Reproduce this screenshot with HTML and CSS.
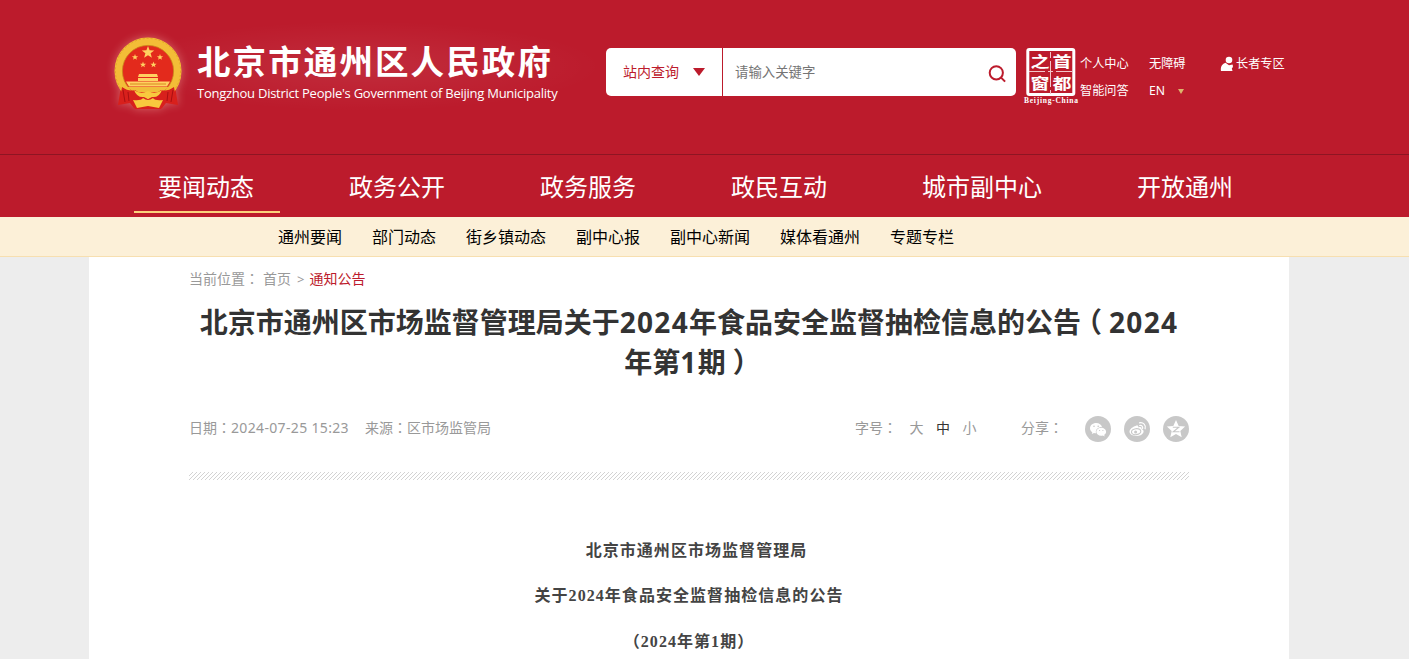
FILE: index.html
```html
<!DOCTYPE html>
<html lang="zh-CN">
<head>
<meta charset="utf-8">
<title>北京市通州区人民政府</title>
<link rel="stylesheet" href="styles.css">
</head>
<body>
<header class="header">
  <div class="brand">
    <svg class="emblem" viewBox="0 0 72 76">
      <path d="M9 50 L6 69 L18 67 L23 73 L49 73 L54 67 L66 69 L63 50Z" fill="#d8201c"/>
      <circle cx="36" cy="35" r="29.500" fill="#e32a1c" stroke="#f3bd37" stroke-width="8"/>
      <circle cx="36" cy="35" r="32.600" fill="none" stroke="#e2a526" stroke-width="1" stroke-dasharray="2 2"/>
      <circle cx="36" cy="35" r="25.600" fill="none" stroke="#c9811a" stroke-width=".8"/>
      <g fill="#ffd060">
        <path id="star" d="M36 10l1.600 4.300 4.600.2-3.600 2.800 1.300 4.400-3.900-2.500-3.900 2.500 1.300-4.400-3.600-2.800 4.600-.2z"/>
        <use href="#star" transform="translate(5 13) scale(.5)"/>
        <use href="#star" transform="translate(30 13) scale(.5)"/>
        <use href="#star" transform="translate(13 20.500) scale(.5)"/>
        <use href="#star" transform="translate(23.500 20.500) scale(.5)"/>
        <path d="M27 38h18l1 3H26zM26 42h20v3H26zM14 45.500h44l-3 5H17z"/>
      </g>
      <path d="M15 51h42l-7 5H22z" fill="#f0bd3a"/>
      <path d="M18 48h36" stroke="#d88a1c"/>
      <path d="M10 51q7 5 13 3l13 9 13-9q6 2 13-3l3 17-11-3-4 7H22l-4-7-11 3z" fill="#d8201c"/>
      <path d="M22 54q7 5 14 1 7 4 14-1-3 8-10 7l-4 2-4-2q-7 1-10-7zM21 64q8 1 10-2 5 4 10 0 2 3 10 2l-4 8-11-2-11 2z" fill="#f8c93e"/>
      <path d="M11 54l2 12M16 56l1 9M61 54l-2 12M56 56l-1 9" stroke="#a90f12" fill="none"/>
    </svg>
    <div class="brand-text">
      <div class="brand-cn">北京市通州区人民政府</div>
      <div class="brand-en">Tongzhou District People's Government of Beijing Municipality</div>
    </div>
  </div>
  <div class="search">
    <div class="search-scope">站内查询<i class="caret"></i></div>
    <div class="search-input">请输入关键字</div>
    <svg class="search-icon" viewBox="0 0 18 18"><circle cx="8.300" cy="7.800" r="6.600"/><path d="M13.100 12.600l4 4"/></svg>
  </div>
  <svg class="seal" viewBox="0 0 56 58">
    <rect class="seal-box" x="4.800" y="1.500" width="46" height="45" rx="1.500"/>
    <path class="seal-lines" d="M27.500 4v6m0 3v26m0 3v4M6 23.500h16m3 0h5m3 0h16"/>
    <g class="seal-chars">
      <text transform="translate(7.500 18.800) scale(1 .78)">之</text>
      <text transform="translate(29.500 18.800) scale(1 .78)">首</text>
      <text transform="translate(7.500 41) scale(1 .8)">窗</text>
      <text transform="translate(29.500 41) scale(1 .8)">都</text>
    </g>
    <text class="seal-name" x="1" y="55" textLength="54">Beijing-China</text>
  </svg>
  <div class="tools">
    <span>个人中心</span><span>无障碍</span>
    <span class="elder"><svg viewBox="0 0 14 16"><circle cx="9" cy="4" r="3.300"/><path d="M1 15q-1.200-6 4.500-8.200L9 9.200l3.500-.7q1.200 2.500-.7 3.800l.7 2.700z"/></svg>长者专区</span>
    <span>智能问答</span><span class="lang">EN<i></i></span>
  </div>
</header>
<nav class="nav">
  <span class="active">要闻动态</span><span>政务公开</span><span>政务服务</span><span>政民互动</span><span>城市副中心</span><span>开放通州</span>
</nav>
<nav class="subnav">
  <span>通州要闻</span><span>部门动态</span><span>街乡镇动态</span><span>副中心报</span><span>副中心新闻</span><span>媒体看通州</span><span>专题专栏</span>
</nav>
<main class="page">
  <div class="crumbs"><span>当前位置<i class="colon" lang="zh-TW">：</i></span><span class="home">首页</span><span class="sep">&gt;</span><span class="current">通知公告</span></div>
  <h1 class="title">北京市通州区市场监督管理局关于<b>2024</b>年食品安全监督抽检信息的公告<i class="open">（</i><b>2024</b><br>年第<b>1</b>期<i class="close">）</i></h1>
  <div class="meta">
    <div class="source"><span>日期<i class="colon" lang="zh-TW">：</i><b>2024-07-25 15:23</b></span><span>来源<i class="colon" lang="zh-TW">：</i>区市场监管局</span></div>
    <div class="sizes"><span>字号<i class="colon" lang="zh-TW">：</i></span><span>大</span><span class="on">中</span><span>小</span></div>
    <div class="share"><span>分享<i class="colon" lang="zh-TW">：</i></span>
      <svg viewBox="0 0 26 26"><circle class="disc" cx="13" cy="13" r="13"/><path class="glyph" d="M11.200 7c-3.500 0-6.200 2.300-6.200 5.200 0 1.700.9 3.100 2.300 4l-.5 1.900 2.200-1.200c.7.2 1.300.3 2 .3-.8-3.600 2-6.100 6-6.100C16.600 8.700 14.200 7 11.200 7z"/><path class="glyph" d="M16.200 11.700c-2.800 0-4.900 1.800-4.900 4s2.100 4 4.900 4c.6 0 1.200-.1 1.700-.3l1.700 1-.4-1.600c1.200-.8 1.900-1.900 1.900-3.100 0-2.200-2.200-4-4.900-4z"/><g class="disc"><circle cx="9" cy="10.200" r=".8"/><circle cx="13.200" cy="10.200" r=".8"/><circle cx="14.600" cy="14.500" r=".6"/><circle cx="17.900" cy="14.500" r=".6"/></g></svg>
      <svg viewBox="0 0 26 26"><circle class="disc" cx="13" cy="13" r="13"/><path class="glyph" d="M11.500 10c1.700-.8 3.200-.4 2.800 1.400 2.300-.8 3.900-.1 3.200 1.600 4.500 1.600 1.500 7-5.100 7-3.900 0-6.900-1.800-6.900-4.400 0-2.400 3.600-5 6-5.600z"/><ellipse class="ring" cx="12.200" cy="15.700" rx="4.700" ry="3" transform="rotate(-8 12 16)"/><circle class="disc" cx="11.600" cy="16" r="1.500"/><path class="wave" d="M15.600 9.500c2.100-.4 3.600 1 3 3M15.500 6.800c3.700-.8 6.800 2.200 5.600 6"/></svg>
      <svg viewBox="0 0 26 26"><circle class="disc" cx="13" cy="13" r="13"/><path class="glyph" d="M13 4l2.700 5.900 6.400.7-4.800 4.300 1.400 6.300-5.700-3.200-5.700 3.200 1.400-6.300-4.800-4.300 6.400-.7z"/><path class="ring" d="M9.800 11.300h6l-5.500 4.400h6.200"/></svg>
    </div>
  </div>
  <svg class="hatch"><defs><pattern id="lines" width="4" height="8" patternUnits="userSpaceOnUse"><path d="M-4 8L4 0M0 8L8 0M-8 8L0 0" stroke="#c8c8c8" stroke-width=".8"/></pattern></defs><rect width="1000" height="8" fill="url(#lines)"/></svg>
  <article class="article">
    <p>北京市通州区市场监督管理局</p>
    <p>关于2024年食品安全监督抽检信息的公告</p>
    <p>（2024年第1期）</p>
  </article>
</main>
</body>
</html>
```
FILE: styles.css
```css
* { box-sizing: border-box; }
body { margin: 0; height: 659px; overflow: hidden; background: #ededed; font-family: "Noto Sans", "Noto Sans CJK SC", sans-serif; font-size: 14px; white-space: nowrap; }
svg { display: block; flex: none; }
i { font-style: normal; }

.header { height: 155px; background: #bc1b2c; border-bottom: 1px solid #8e1523; display: flex; align-items: flex-start; color: #fff; padding-left: 112px; }
.brand { display: flex; width: 494px; padding-top: 36px; background: radial-gradient(ellipse 240px 45px at 250px 66px, rgba(255,255,255,.08), transparent); }
.emblem { width: 72px; height: 76px; filter: drop-shadow(0 0 5px rgba(255,210,190,.4)); }
.brand-text { margin-left: 13px; }
.brand-cn { height: 45px; line-height: 50px; font-size: 33.500px; font-weight: 700; letter-spacing: 2.100px; }
.brand-en { line-height: 24px; font-family: "Open Sans", sans-serif; font-size: 13px; letter-spacing: -.255px; }

.search { width: 410px; height: 48px; margin-top: 48px; display: flex; align-items: center; background: #fff; border-radius: 5px; line-height: 48px; }
.search-scope { width: 117px; padding-left: 17px; display: flex; align-items: center; color: #bc1b2c; border-right: 1px solid #bc1b2c; }
.caret { margin-left: 14px; border: 6px solid transparent; border-top: 8px solid #bc1b2c; border-bottom: 0; }
.search-input { flex: 1; padding-left: 12px; color: #757575; font-size: 13.400px; }
.search-icon { width: 18px; height: 18px; margin: 3px 10px 0 0; fill: none; stroke: #bc1b2c; stroke-width: 2; }

.seal { width: 56px; height: 58px; margin: 48px 0 0 7px; }
.seal-box { fill: none; stroke: #fff; stroke-width: 3; }
.seal-lines { fill: none; stroke: #f3c4c9; stroke-width: 1; }
.seal-chars { fill: #fff; font: 600 19px "Noto Sans CJK SC", sans-serif; }
.seal-name { fill: #fff; font: 700 7.500px "Liberation Serif", serif; }

.tools { display: grid; grid-template-columns: 69px 71px 66px; row-gap: 7px; margin: 54px 0 0 -1px; padding-left: 2px; font-size: 12.200px; line-height: 20px; }
.elder { display: flex; align-items: center; }
.elder svg { width: 14px; height: 16px; margin-right: 2px; fill: #fff; }
.lang { display: flex; align-items: center; }
.lang i { margin-left: 13px; border: 3px solid transparent; border-top: 5px solid #dcb56c; border-bottom: 0; }

.nav { height: 62px; display: flex; gap: 45px; padding-left: 134px; background: #bc1b2c; color: #fff; font-size: 24px; line-height: 64px; }
.nav span { height: 58px; padding: 0 26px 0 24px; border-bottom: 2px solid transparent; }
.nav .active { border-color: #fbd27c; }

.subnav { height: 40px; display: flex; gap: 30px; padding-left: 278px; background: #fcf0d8; border-bottom: 1px solid #f7dfb0; color: #000; font-size: 16px; line-height: 40px; }

.page { width: 1200px; height: 402px; margin-left: 89px; padding: 0 100px; background: #fff; }
.colon { font-family: "Noto Sans CJK TC", sans-serif; line-height: 1; }
.crumbs { display: flex; height: 44px; line-height: 44px; color: #999; }
.home { margin-left: 4px; }
.sep { margin: 0 5px 0 6px; font-size: 13px; }
.current { color: #bc1b2c; }
.title { margin: 0; padding-top: 1px; height: 83px; text-align: center; color: #333; font-size: 28px; line-height: 40px; font-weight: 700; }
.title b { font-family: "Open Sans", sans-serif; font-weight: 700; letter-spacing: 1.300px; }
.title .open { margin: 0 7px 0 -7px; }
.title .close { margin: 0 -7px 0 7px; }
.meta { display: flex; height: 88px; line-height: 88px; color: #999; }
.source { width: 666px; display: flex; gap: 16px; }
.source b { font-weight: 400; letter-spacing: .34px; }
.sizes { width: 166px; display: flex; gap: 12.500px; }
.sizes .on { color: #333; }
.share { display: flex; gap: 13px; align-items: center; }
.share span { width: 51px; }
.share svg { width: 26px; height: 26px; margin-top: 1px; }
.disc { fill: #c8c8c8; }
.glyph { fill: #fff; }
.ring { fill: none; stroke: #c8c8c8; stroke-width: 1.100; }
.wave { fill: none; stroke: #fff; stroke-width: 1.200; stroke-linecap: round; }
.hatch { width: 1000px; height: 8px; }
.article { padding-top: 48px; font-family: "Liberation Serif", "Noto Sans CJK SC", serif; font-size: 16px; font-weight: 600; letter-spacing: 1.050px; color: #444; text-align: center; }
.article p { margin: 0; height: 45.400px; line-height: 46.500px; }
.article p:first-child { padding-left: 15px; }
```
